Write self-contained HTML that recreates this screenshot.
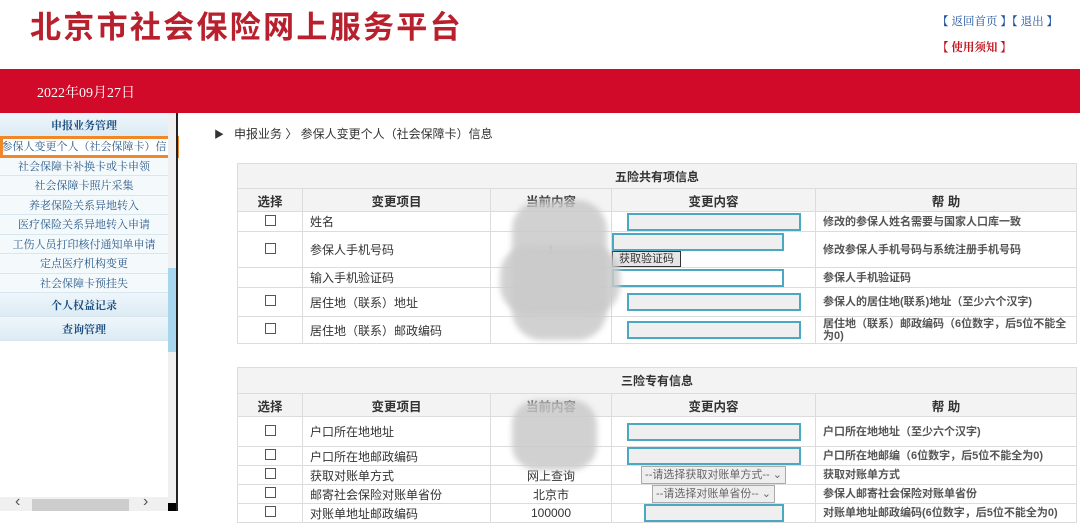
<!DOCTYPE html>
<html><head><meta charset="utf-8"><style>
*{margin:0;padding:0;box-sizing:border-box}
body{width:1080px;height:511px;overflow:hidden;background:#fff;position:relative;font-family:"Liberation Sans","Noto Sans CJK SC",sans-serif;color:#333}
.a{position:absolute}
.title{left:30px;top:2px;font-size:31px;font-weight:bold;color:#b8202e;letter-spacing:2.3px;font-family:"Noto Sans CJK SC",sans-serif}
.band{left:0;top:69px;width:1080px;height:44px;background:#d20a2a}
.date{left:37px;top:82px;color:#fff;font-size:14px;font-family:"Liberation Serif","Noto Serif CJK SC",serif}
.lk{font-family:"Noto Serif CJK SC",serif;font-size:11.5px}
.side{left:0;top:113px;width:168px;font-family:"Noto Serif CJK SC",serif;font-size:11px;color:#2a5a8a}
.side div{height:19.5px;line-height:19px;text-align:center;border-bottom:1px solid #d8e6ee;background:#f4f9fc;white-space:nowrap;overflow:hidden}
.side .h{font-weight:bold;color:#1c4f80;background:linear-gradient(#eef6fb,#dcebf4);height:24px;line-height:24px}
table{position:absolute;border-collapse:collapse;font-size:12px;table-layout:fixed}
td{border:1px solid #dcdcdc;padding:0 7px;white-space:nowrap;overflow:hidden}
.cap td{background:#f3f3f3;text-align:center;font-weight:bold;color:#333}
.hd td{background:#f3f3f3;text-align:center;font-weight:bold;font-size:12.5px}
.c{text-align:center}
.help{font-weight:bold;color:#555;font-size:11px;white-space:normal;line-height:12px}
.cb{display:inline-block;width:11px;height:11px;border:1px solid #555;background:#fff}
.in{display:inline-block;height:18px;border:2px solid #4aa8c0;background:#efefef;vertical-align:middle}
.sel{display:inline-block;height:18px;border:1px solid #aaa;background:#eee;font-size:11px;color:#666;line-height:16px;padding:0 3px}
.blur{position:absolute;background:#cacaca;filter:blur(3px);opacity:.85}
</style></head><body>
<div class="a title">北京市社会保险网上服务平台</div>
<div class="a lk" style="left:937px;top:13px;color:#1a4f9a">【 返回首页 】【 退出 】</div>
<div class="a lk" style="left:937px;top:39px;color:#c0141e;font-weight:bold">【 使用须知 】</div>
<div class="a band"></div>
<div class="a date">2022年09月27日</div>

<div class="a side">
<div class="h">申报业务管理</div>
<div style="background:#fff">参保人变更个人（社会保障卡）信</div>
<div>社会保障卡补换卡或卡申领</div>
<div>社会保障卡照片采集</div>
<div>养老保险关系异地转入</div>
<div>医疗保险关系异地转入申请</div>
<div>工伤人员打印核付通知单申请</div>
<div>定点医疗机构变更</div>
<div>社会保障卡预挂失</div>
<div class="h">个人权益记录</div>
<div class="h">查询管理</div>
</div>
<div class="a" style="left:0;top:136px;width:179px;height:22px;border:3px solid #f0882a"></div>
<div class="a" style="left:168px;top:113px;width:8px;height:398px;background:#f0f0f0"></div>
<div class="a" style="left:168px;top:268px;width:8px;height:84px;background:#a9d6ef"></div>
<div class="a" style="left:176px;top:113px;width:2px;height:398px;background:#222"></div>
<div class="a" style="left:0;top:497px;width:168px;height:14px;background:#f0f0f0"></div>
<div class="a" style="left:32px;top:499px;width:97px;height:12px;background:#cdcdcd"></div>
<div class="a" style="left:15px;top:493px;font-size:16px;color:#555">‹</div>
<div class="a" style="left:143px;top:493px;font-size:16px;color:#555">›</div>
<div class="a" style="left:168px;top:503px;width:8px;height:8px;background:#000"></div>

<div class="a" style="left:214px;top:125px;font-size:12px;color:#333"><span style="font-size:10px">▶</span>&nbsp;&nbsp; 申报业务 〉 参保人变更个人（社会保障卡）信息</div>

<table style="left:237px;top:163px;width:839px">
<colgroup><col style="width:65px"><col style="width:188px"><col style="width:121px"><col style="width:204px"><col style="width:261px"></colgroup>
<tr class="cap" style="height:25px"><td colspan="5">五险共有项信息</td></tr>
<tr class="hd" style="height:23px"><td>选择</td><td>变更项目</td><td>当前内容</td><td>变更内容</td><td>帮 助</td></tr>
<tr style="height:20px"><td class="c"><span class="cb"></span></td><td>姓名</td><td></td><td class="c"><span class="in" style="width:174px"></span></td><td class="help">修改的参保人姓名需要与国家人口库一致</td></tr>
<tr style="height:35px"><td class="c"><span class="cb"></span></td><td>参保人手机号码</td><td class="c">1</td><td style="padding:0;vertical-align:top"><span class="in" style="width:172px;margin-top:1px"></span><br><span style="display:inline-block;border:1px solid #333;background:#e6e6e6;font-size:11px;padding:0 6px;height:16px;line-height:14px">获取验证码</span></td><td class="help">修改参保人手机号码与系统注册手机号码</td></tr>
<tr style="height:20px"><td></td><td>输入手机验证码</td><td></td><td style="padding:0"><span class="in" style="width:172px;background:#fff"></span></td><td class="help">参保人手机验证码</td></tr>
<tr style="height:29px"><td class="c"><span class="cb"></span></td><td>居住地（联系）地址</td><td></td><td class="c"><span class="in" style="width:174px"></span></td><td class="help">参保人的居住地(联系)地址（至少六个汉字)</td></tr>
<tr style="height:27px"><td class="c"><span class="cb"></span></td><td>居住地（联系）邮政编码</td><td></td><td class="c"><span class="in" style="width:174px"></span></td><td class="help">居住地（联系）邮政编码（6位数字，后5位不能全为0)</td></tr>
</table>

<table style="left:237px;top:367px;width:839px">
<colgroup><col style="width:65px"><col style="width:188px"><col style="width:121px"><col style="width:204px"><col style="width:261px"></colgroup>
<tr class="cap" style="height:26px"><td colspan="5">三险专有信息</td></tr>
<tr class="hd" style="height:23px"><td>选择</td><td>变更项目</td><td>当前内容</td><td>变更内容</td><td>帮 助</td></tr>
<tr style="height:30px"><td class="c"><span class="cb"></span></td><td>户口所在地地址</td><td></td><td class="c"><span class="in" style="width:174px"></span></td><td class="help">户口所在地地址（至少六个汉字)</td></tr>
<tr style="height:19px"><td class="c"><span class="cb"></span></td><td>户口所在地邮政编码</td><td></td><td class="c"><span class="in" style="width:174px"></span></td><td class="help">户口所在地邮编（6位数字，后5位不能全为0)</td></tr>
<tr style="height:19px"><td class="c"><span class="cb"></span></td><td>获取对账单方式</td><td class="c">网上查询</td><td class="c"><span class="sel">--请选择获取对账单方式-- ⌄</span></td><td class="help">获取对账单方式</td></tr>
<tr style="height:19px"><td class="c"><span class="cb"></span></td><td>邮寄社会保险对账单省份</td><td class="c">北京市</td><td class="c"><span class="sel">--请选择对账单省份-- ⌄</span></td><td class="help">参保人邮寄社会保险对账单省份</td></tr>
<tr style="height:19px"><td class="c"><span class="cb"></span></td><td>对账单地址邮政编码</td><td class="c">100000</td><td class="c"><span class="in" style="width:140px"></span></td><td class="help">对账单地址邮政编码(6位数字，后5位不能全为0)</td></tr>
</table>

<div class="blur" style="left:512px;top:200px;width:95px;height:140px;border-radius:30px"></div>
<div class="blur" style="left:500px;top:245px;width:120px;height:70px;border-radius:30px"></div>
<div class="blur" style="left:512px;top:400px;width:85px;height:70px;border-radius:25px"></div>
</body></html>
